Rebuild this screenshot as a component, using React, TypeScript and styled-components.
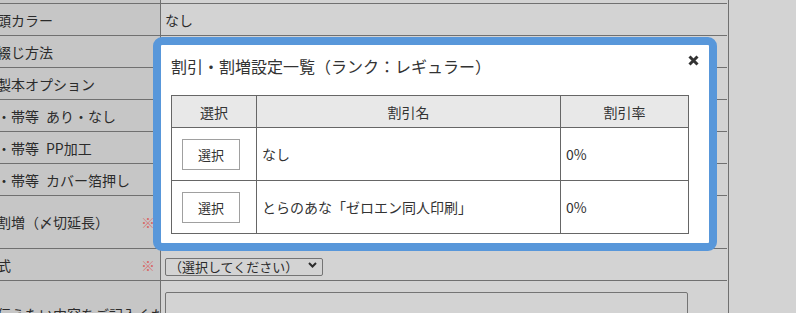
import React from "react";
import styled, { createGlobalStyle } from "styled-components";

const Global = createGlobalStyle`
  html, body { margin: 0; padding: 0; }
  body {
    background: #d3d3d3;
    font-family: "Noto Sans CJK JP", "Noto Sans", sans-serif;
    color: #2b2b2b;
  }
`;

const Page = styled.div`
  position: relative;
  width: 796px;
  height: 313px;
  overflow: hidden;
  background: #d3d3d3;
`;

const FormGrid = styled.div`
  display: grid;
  grid-template-columns: 174px 566px;
  width: 741px;
  margin: -28px 0 0 -13px;
  border-right: 1px solid #707070;
`;

const LabelCell = styled.div<{ $h: number; $top?: number }>`
  box-sizing: border-box;
  height: ${(p) => p.$h}px;
  background: #c6c6c6;
  border-right: 1px solid #707070;
  border-bottom: 1px solid #707070;
  padding: ${(p) => (p.$top ? `${p.$top}px 5px 0 10px` : "0 5px 0 10px")};
  display: flex;
  align-items: ${(p) => (p.$top ? "flex-start" : "center")};
  justify-content: space-between;
  font-size: 14px;
  line-height: 20px;
  white-space: nowrap;
  color: #2b2b2b;
`;

const Required = styled.span`
  color: #d86868;
  font-size: 14px;
`;

const ValueCell = styled.div<{ $h: number; $top?: number }>`
  box-sizing: border-box;
  height: ${(p) => p.$h}px;
  background: #d3d3d3;
  border-bottom: 1px solid #707070;
  padding: ${(p) => (p.$top ? `${p.$top}px 0 0 4px` : "0 0 0 4px")};
  display: flex;
  align-items: ${(p) => (p.$top ? "flex-start" : "center")};
  font-size: 14px;
  color: #2b2b2b;
`;

const SelectWrap = styled.div`
  position: relative;
  width: 158px;
  height: 18px;
`;

const Select = styled.select`
  appearance: none;
  -webkit-appearance: none;
  box-sizing: border-box;
  width: 158px;
  height: 18px;
  margin: 0;
  padding: 0 0 0 3px;
  border: 1px solid #747474;
  border-radius: 2px;
  background: #d3d3d3;
  font-family: "Noto Sans CJK JP", sans-serif;
  font-size: 13px;
  line-height: 16px;
  color: #2b2b2b;
`;

const Chevron = styled.svg`
  position: absolute;
  right: 6px;
  top: 6px;
  pointer-events: none;
`;

const TextArea = styled.textarea`
  box-sizing: border-box;
  width: 523px;
  height: 80px;
  margin: 0;
  border: 1px solid #747474;
  border-radius: 2px;
  background: #d3d3d3;
  resize: none;
`;

const Modal = styled.div`
  position: absolute;
  left: 153px;
  top: 37px;
  width: 564px;
  height: 214px;
  box-sizing: border-box;
  border: 8px solid #5897da;
  border-radius: 9px;
  background: #ffffff;
  padding: 9px 10px 0;
`;

const Title = styled.h2`
  margin: 0 0 17px;
  font-size: 16px;
  line-height: 24px;
  font-weight: normal;
  color: #333;
`;

const Close = styled.button`
  position: absolute;
  top: 10px;
  right: 10px;
  width: 11px;
  height: 11px;
  padding: 0;
  border: 0;
  background: transparent;
  display: flex;
  cursor: pointer;
`;

const Table = styled.table`
  border-collapse: collapse;
  table-layout: fixed;
  width: 518px;
  font-size: 14px;
  color: #333;
`;

const Th = styled.th`
  height: 31px;
  padding: 0;
  background: #e8e8e8;
  border: 1px solid #666;
  font-weight: normal;
  text-align: center;
`;

const Td = styled.td<{ $pad?: number }>`
  height: 52px;
  padding: 0 0 0 ${(p) => p.$pad ?? 5}px;
  border: 1px solid #666;
  text-align: left;
  vertical-align: middle;
`;

const PickButton = styled.button`
  box-sizing: border-box;
  width: 58px;
  height: 31px;
  padding: 0;
  border: 1px solid #a0a0a0;
  background: #fff;
  font-family: "Noto Sans CJK JP", sans-serif;
  font-size: 13px;
  color: #333;
  display: block;
`;

const rows = [
  { label: "表紙カラー", h: 32 },
  { label: "頭カラー", h: 32, value: "なし" },
  { label: "綴じ方法", h: 32 },
  { label: "製本オプション", h: 32 },
  { label: "・帯等\u2002あり・なし", h: 32 },
  { label: "・帯等\u2002PP加工", h: 32 },
  { label: "・帯等\u2002カバー箔押し", h: 32 },
];

const discounts = [
  { name: "なし", rate: "0%" },
  { name: "とらのあな「ゼロエン同人印刷」", rate: "0%" },
];

export default function App() {
  return (
    <Page>
      <Global />
      <FormGrid>
        {rows.map((r, i) => (
          <React.Fragment key={i}>
            <LabelCell $h={r.h}>{r.label}</LabelCell>
            <ValueCell $h={r.h}>{r.value ?? ""}</ValueCell>
          </React.Fragment>
        ))}
        <LabelCell $h={53}>
          割増（〆切延長）<Required>※</Required>
        </LabelCell>
        <ValueCell $h={53} />
        <LabelCell $h={32}>
          式<Required>※</Required>
        </LabelCell>
        <ValueCell $h={32}>
          <SelectWrap>
            <Select defaultValue="">
              <option value="">（選択してください）</option>
            </Select>
            <Chevron width="9" height="6" viewBox="0 0 9 6">
              <path d="M1 1 L4.5 4.5 L8 1" fill="none" stroke="#2b2b2b" strokeWidth="2" />
            </Chevron>
          </SelectWrap>
        </ValueCell>
        <LabelCell $h={120} $top={23}>
          伝えたい内容をご記入ください
        </LabelCell>
        <ValueCell $h={120} $top={11}>
          <TextArea />
        </ValueCell>
      </FormGrid>

      <Modal>
        <Title>割引・割増設定一覧（ランク：レギュラー）</Title>
        <Close aria-label="閉じる">
          <svg width="11" height="11" viewBox="0 0 11 11">
            <path d="M1.5 1.5 L9.5 9.5 M9.5 1.5 L1.5 9.5" stroke="#333" strokeWidth="3" fill="none" />
          </svg>
        </Close>
        <Table>
          <colgroup>
            <col style={{ width: 85 }} />
            <col style={{ width: 304 }} />
            <col style={{ width: 128 }} />
          </colgroup>
          <thead>
            <tr>
              <Th>選択</Th>
              <Th>割引名</Th>
              <Th>割引率</Th>
            </tr>
          </thead>
          <tbody>
            {discounts.map((d, i) => (
              <tr key={i}>
                <Td $pad={10}>
                  <PickButton>選択</PickButton>
                </Td>
                <Td>{d.name}</Td>
                <Td>{d.rate}</Td>
              </tr>
            ))}
          </tbody>
        </Table>
      </Modal>
    </Page>
  );
}
